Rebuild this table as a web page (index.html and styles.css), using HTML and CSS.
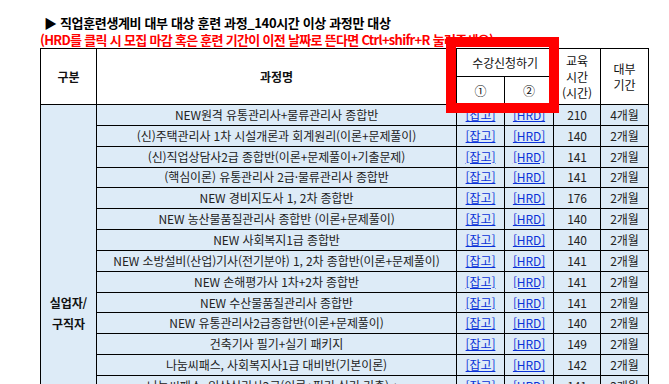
FILE: index.html
```html
<!DOCTYPE html>
<html lang="ko">
<head>
<meta charset="utf-8">
<title>직업훈련생계비 대부 대상 훈련 과정</title>
<link rel="stylesheet" href="styles.css">
</head>
<body>
<div class="page">
  <p class="title">▶ 직업훈련생계비 대부 대상 훈련 과정_140시간 이상 과정만 대상</p>
  <p class="notice">(HRD를 클릭 시 모집 마감 혹은 훈련 기간이 이전 날짜로 뜬다면 Ctrl+shifr+R 눌러주세요)</p>
  <table class="courses">
    <colgroup>
      <col class="c-kind"><col class="c-name"><col class="c-l1"><col class="c-l2"><col class="c-hours"><col class="c-term">
    </colgroup>
    <thead>
      <tr class="h1">
        <th rowspan="2" class="strong">구분</th>
        <th rowspan="2" class="strong">과정명</th>
        <th colspan="2">수강신청하기</th>
        <th rowspan="2" class="stack">교육<br>시간<br>(시간)</th>
        <th rowspan="2" class="stack">대부<br>기간</th>
      </tr>
      <tr class="h2">
        <th>①</th>
        <th>②</th>
      </tr>
    </thead>
    <tbody>
      <tr><td rowspan="20" class="kind">실업자/<br>구직자</td><td class="name">NEW원격 유통관리사+물류관리사 종합반</td><td><a href="#">[잡고]</a></td><td><a href="#">[HRD]</a></td><td>210</td><td>4개월</td></tr>
      <tr><td class="name">(신)주택관리사 1차 시설개론과 회계원리(이론+문제풀이)</td><td><a href="#">[잡고]</a></td><td><a href="#">[HRD]</a></td><td>140</td><td>2개월</td></tr>
      <tr><td class="name">(신)직업상담사2급 종합반(이론+문제풀이+기출문제)</td><td><a href="#">[잡고]</a></td><td><a href="#">[HRD]</a></td><td>141</td><td>2개월</td></tr>
      <tr><td class="name">(핵심이론) 유통관리사 2급·물류관리사 종합반</td><td><a href="#">[잡고]</a></td><td><a href="#">[HRD]</a></td><td>141</td><td>2개월</td></tr>
      <tr><td class="name">NEW 경비지도사 1, 2차 종합반</td><td><a href="#">[잡고]</a></td><td><a href="#">[HRD]</a></td><td>176</td><td>2개월</td></tr>
      <tr><td class="name">NEW 농산물품질관리사 종합반 (이론+문제풀이)</td><td><a href="#">[잡고]</a></td><td><a href="#">[HRD]</a></td><td>140</td><td>2개월</td></tr>
      <tr><td class="name">NEW 사회복지1급 종합반</td><td><a href="#">[잡고]</a></td><td><a href="#">[HRD]</a></td><td>140</td><td>2개월</td></tr>
      <tr><td class="name">NEW 소방설비(산업)기사(전기분야) 1, 2차 종합반(이론+문제풀이)</td><td><a href="#">[잡고]</a></td><td><a href="#">[HRD]</a></td><td>141</td><td>2개월</td></tr>
      <tr><td class="name">NEW 손해평가사 1차+2차 종합반</td><td><a href="#">[잡고]</a></td><td><a href="#">[HRD]</a></td><td>141</td><td>2개월</td></tr>
      <tr><td class="name">NEW 수산물품질관리사 종합반</td><td><a href="#">[잡고]</a></td><td><a href="#">[HRD]</a></td><td>141</td><td>2개월</td></tr>
      <tr><td class="name">NEW 유통관리사2급종합반(이론+문제풀이)</td><td><a href="#">[잡고]</a></td><td><a href="#">[HRD]</a></td><td>140</td><td>2개월</td></tr>
      <tr><td class="name">건축기사 필기+실기 패키지</td><td><a href="#">[잡고]</a></td><td><a href="#">[HRD]</a></td><td>149</td><td>2개월</td></tr>
      <tr><td class="name">나눔씨패스, 사회복지사1급 대비반(기본이론)</td><td><a href="#">[잡고]</a></td><td><a href="#">[HRD]</a></td><td>142</td><td>2개월</td></tr>
      <tr><td class="name">나눔씨패스, 임상심리사2급(이론+필기 실기 기출) +α</td><td><a href="#">[잡고]</a></td><td><a href="#">[HRD]</a></td><td>141</td><td>2개월</td></tr>
      <tr><td class="name">나눔씨패스, 직업상담사2급 종합반(이론+문제풀이)</td><td><a href="#">[잡고]</a></td><td><a href="#">[HRD]</a></td><td>140</td><td>2개월</td></tr>
      <tr><td class="name">물류관리사 종합반(이론+문제풀이)</td><td><a href="#">[잡고]</a></td><td><a href="#">[HRD]</a></td><td>141</td><td>2개월</td></tr>
      <tr><td class="name">사회복지사1급 종합반(이론+문제풀이)</td><td><a href="#">[잡고]</a></td><td><a href="#">[HRD]</a></td><td>142</td><td>2개월</td></tr>
      <tr><td class="name">산업안전기사 필기+실기 종합반</td><td><a href="#">[잡고]</a></td><td><a href="#">[HRD]</a></td><td>150</td><td>2개월</td></tr>
      <tr><td class="name">전기기사 필기+실기 패키지</td><td><a href="#">[잡고]</a></td><td><a href="#">[HRD]</a></td><td>160</td><td>2개월</td></tr>
      <tr><td class="name">청소년상담사 3급 종합반(이론+문제풀이)</td><td><a href="#">[잡고]</a></td><td><a href="#">[HRD]</a></td><td>140</td><td>2개월</td></tr>
    </tbody>
  </table>
  <div class="highlight" aria-hidden="true"></div>
</div>
</body>
</html>
```

FILE: styles.css
```css
html, body {
  margin: 0;
  padding: 0;
  background: #ffffff;
}

body {
  font-family: "Noto Sans CJK KR", "Noto Sans", sans-serif;
  color: #111111;
}

.page {
  position: relative;
  padding: 14px 0 0 40px;
}

.title {
  margin: 0 0 0 4px;
  font-size: 13px;
  line-height: 18px;
  font-weight: 700;
  letter-spacing: -0.35px;
  color: #000000;
}

.notice {
  margin: 0;
  font-size: 13px;
  line-height: 16px;
  font-weight: 700;
  letter-spacing: -0.7px;
  color: #ff0000;
}

.courses {
  border-collapse: collapse;
  table-layout: fixed;
  width: 609px;
  font-size: 12px;
  letter-spacing: -0.1px;
}

.c-kind { width: 56px; }
.c-name { width: 360px; }
.c-l1 { width: 48px; }
.c-l2 { width: 49px; }
.c-hours { width: 47px; }
.c-term { width: 48px; }

.courses th,
.courses td {
  border: 1px solid #000000;
  padding: 0;
  text-align: center;
  vertical-align: middle;
  white-space: nowrap;
  overflow: hidden;
}

.courses th {
  background: #ffffff;
  font-weight: 400;
  color: #111111;
  line-height: 16px;
}

.courses th.strong {
  font-weight: 700;
}

.courses .h1 { height: 28px; }
.courses .h2 { height: 28px; }

.courses td {
  background: #ddebf7;
  color: #222222;
  line-height: 16px;
}

.courses tbody tr { height: 20.85px; }

.courses td.kind {
  font-weight: 700;
  line-height: 21px;
  color: #111111;
}

.courses a {
  color: #0a32d8;
  text-decoration: underline;
}

.highlight {
  position: absolute;
  left: 446px;
  top: 37px;
  width: 93px;
  height: 56px;
  border: 10px solid #ff0000;
}
```
